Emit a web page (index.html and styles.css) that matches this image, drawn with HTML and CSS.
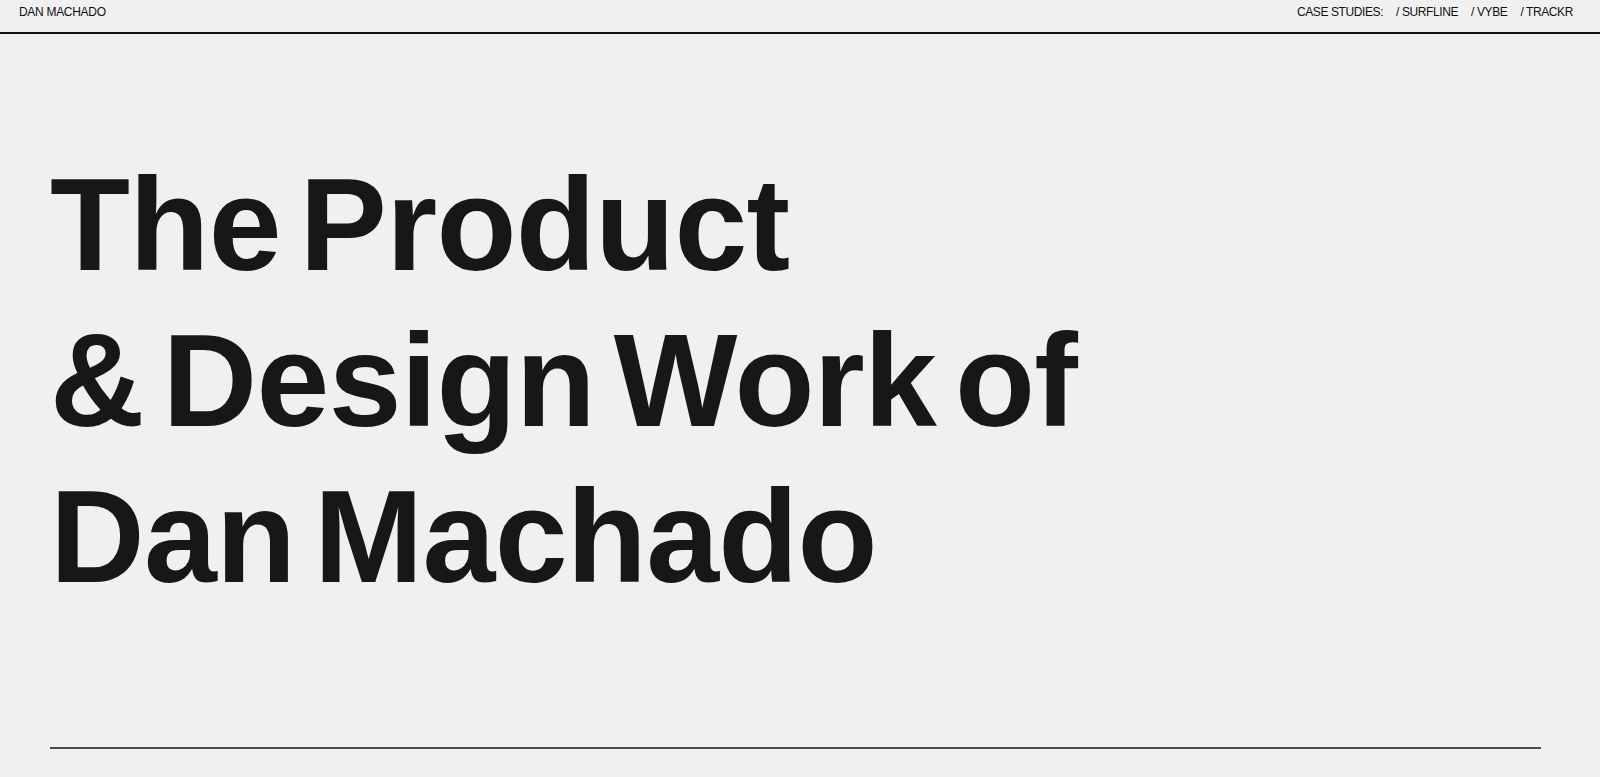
FILE: index.html
```html
<!DOCTYPE html>
<html lang="en">
<head>
<meta charset="utf-8">
<title>Dan Machado</title>
<link rel="stylesheet" href="styles.css">
</head>
<body>
<header class="topbar">
  <a class="brand" href="#">DAN MACHADO</a>
  <nav class="nav">
    <span class="nav-label">CASE STUDIES:</span>
    <a class="nav-link" href="#">/ SURFLINE</a>
    <a class="nav-link" href="#">/ VYBE</a>
    <a class="nav-link" href="#">/ TRACKR</a>
  </nav>
</header>
<main class="main">
  <h1 class="hero">The Product<br>&amp; Design Work of<br>Dan Machado</h1>
  <hr class="rule">
</main>
</body>
</html>
```

FILE: styles.css
```css
* { box-sizing: border-box; }
html, body { margin: 0; padding: 0; }
body {
  background: #f0f0f0;
  color: #171717;
  font-family: "Liberation Sans", Arial, sans-serif;
  height: 777px;
  overflow: hidden;
}
.topbar {
  height: 34px;
  display: flex;
  justify-content: space-between;
  align-items: flex-start;
  padding: 5px 27px 0 19px;
  border-bottom: 2px solid #111;
  font-size: 12px;
  letter-spacing: -0.3px;
  line-height: 14px;
}
.brand, .nav-link {
  color: #111;
  text-decoration: none;
}
.nav {
  display: flex;
  gap: 13px;
  letter-spacing: -0.4px;
}
.nav-label { color: #111; }
.main {
  padding: 0 59px 0 50px;
}
.hero {
  margin: 113px 0 0 0;
  font-size: 131px;
  line-height: 156px;
  font-weight: 700;
  letter-spacing: -0.7px;
  word-spacing: -17px;
  color: #171717;
}
.rule {
  margin: 132px 0 0 0;
  border: 0;
  border-top: 2px solid #4d4d4d;
  height: 0;
}
```
